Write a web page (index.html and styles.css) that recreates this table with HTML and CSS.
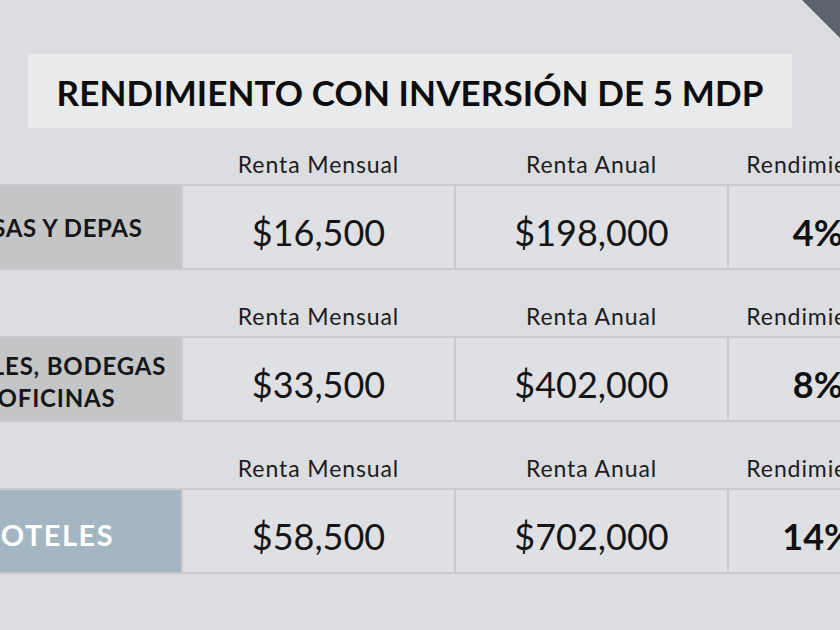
FILE: index.html
```html
<!DOCTYPE html>
<html lang="es">
<head>
<meta charset="utf-8">
<title>Rendimiento con inversión de 5 MDP</title>
<link rel="stylesheet" href="styles.css">
</head>
<body>
<div class="corner"></div>
<main class="slide">
  <h1 class="title">RENDIMIENTO CON INVERSIÓN DE 5 MDP</h1>
  <section class="block">
    <div class="grid head">
      <span></span><span>Renta Mensual</span><span>Renta Anual</span><span>Rendimiento</span>
    </div>
    <div class="grid row">
      <div class="cell label one">CASAS Y DEPAS</div>
      <div class="cell value">$16,500</div>
      <div class="cell value">$198,000</div>
      <div class="cell pct">4%</div>
    </div>
  </section>
  <section class="block">
    <div class="grid head">
      <span></span><span>Renta Mensual</span><span>Renta Anual</span><span>Rendimiento</span>
    </div>
    <div class="grid row">
      <div class="cell label two">LOCALES, BODEGAS<br>Y OFICINAS</div>
      <div class="cell value">$33,500</div>
      <div class="cell value">$402,000</div>
      <div class="cell pct">8%</div>
    </div>
  </section>
  <section class="block">
    <div class="grid head">
      <span></span><span>Renta Mensual</span><span>Renta Anual</span><span>Rendimiento</span>
    </div>
    <div class="grid row">
      <div class="cell label hotel">HOTELES</div>
      <div class="cell value">$58,500</div>
      <div class="cell value">$702,000</div>
      <div class="cell pct">14%</div>
    </div>
  </section>
</main>
</body>
</html>
```
FILE: styles.css
```css
html, body {
  margin: 0;
  padding: 0;
}
body {
  width: 840px;
  height: 630px;
  overflow: hidden;
  background: #dcdde0;
  font-family: Lato, "Noto Sans", sans-serif;
  color: #141414;
  position: relative;
}
.corner {
  position: absolute;
  top: 0;
  right: 0;
  width: 38px;
  height: 38px;
  background: #5b636d;
  clip-path: polygon(0 0, 100% 0, 100% 100%);
}
.slide {
  padding-top: 54px;
}
.title {
  margin: 0 0 0 28px;
  width: 764px;
  height: 74px;
  background: #e9eaec;
  display: flex;
  align-items: center;
  justify-content: center;
  padding-top: 2px;
  box-sizing: border-box;
  font-size: 35px;
  font-weight: 700;
  letter-spacing: 0.1px;
  color: #0d0d0d;
}
.block {
  margin-left: -90px;
  margin-top: 22px;
}
.block + .block {
  margin-top: 32px;
}
.grid {
  display: grid;
  grid-template-columns: 271px 271px 271px 178px;
  column-gap: 2px;
}
.head {
  height: 34px;
  align-items: end;
  font-size: 23px;
  letter-spacing: 0.9px;
  color: #1c1c1c;
  text-align: center;
  line-height: 23px;
}
.head span {
  padding-bottom: 8px;
}
.head span:last-child {
  padding-right: 6px;
}
.row {
  height: 86px;
  background: #c9cacd;
  box-sizing: border-box;
  padding: 2px 0;
}
.cell {
  display: flex;
  align-items: center;
  justify-content: center;
  text-align: center;
  background: #dfe0e3;
  box-sizing: border-box;
}
.label {
  background: #c4c5c7;
  font-size: 24px;
  font-weight: 700;
  letter-spacing: 0.6px;
  color: #161616;
  padding-top: 1px;
}
.label.one {
  padding-left: 10px;
}
.label.two {
  font-size: 24px;
  letter-spacing: 0.8px;
  line-height: 32px;
  padding-top: 6px;
}
.label.hotel {
  background: #a3b6c2;
  color: #ffffff;
  font-size: 29px;
  letter-spacing: 1.5px;
  padding-top: 6px;
}
.value {
  font-size: 36px;
  font-weight: 400;
  color: #151515;
  padding-top: 10px;
}
.pct {
  font-size: 36px;
  font-weight: 700;
  color: #111111;
  padding-top: 10px;
}
```
